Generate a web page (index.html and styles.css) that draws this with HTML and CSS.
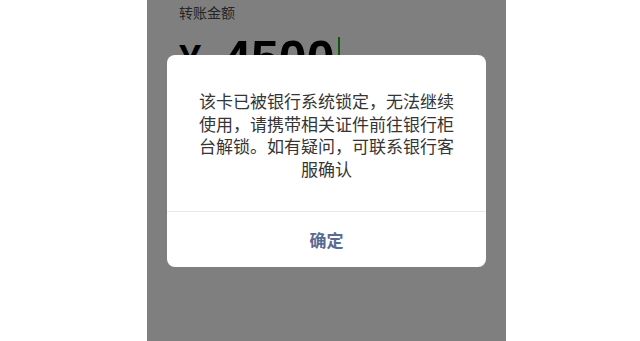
FILE: index.html
```html
<!DOCTYPE html>
<html lang="zh-CN">
<head>
  <meta charset="UTF-8">
  <meta name="viewport" content="width=device-width, initial-scale=1.0">
  <title>转账</title>
  <link rel="stylesheet" href="styles.css">
</head>
<body>
  <div class="phone">
    <!-- Transfer form behind the dialog -->
    <div class="transfer">
      <p class="label">转账金额</p>
      <div class="amount">
        <span class="currency">¥</span>
        <span class="value">4500</span>
        <span class="cursor"></span>
      </div>
    </div>

    <!-- Mask + alert -->
    <div class="mask"></div>
    <div class="dialog">
      <div class="dialog-body">
        该卡已被银行系统锁定，无法继续使用，请携带相关证件前往银行柜台解锁。如有疑问，可联系银行客服确认
      </div>
      <div class="dialog-footer">
        <button class="dialog-btn">确定</button>
      </div>
    </div>
  </div>
</body>
</html>
```

FILE: styles.css
```css
body {
  margin: 0;
  padding: 0;
  background: #fff;
  font-family: "Noto Sans CJK SC", "Liberation Sans", sans-serif;
}

.phone {
  position: relative;
  width: 359px;
  height: 341px;
  margin-left: 147px;
  background: #fff;
  overflow: hidden;
}

.transfer {
  padding: 0 32px;
}

.label {
  margin: 0;
  padding-top: 1px;
  font-size: 14px;
  line-height: 22px;
  color: #4a4a4a;
}

.amount {
  display: flex;
  align-items: center;
  margin-top: 6px;
  height: 60px;
  color: #000;
  font-family: "Liberation Sans", sans-serif;
  font-weight: bold;
}

.currency {
  font-size: 40px;
  margin-right: 22px;
}

.value {
  font-size: 50px;
}

.cursor {
  width: 2px;
  height: 44px;
  margin-left: 4px;
  background: #1aad19;
}

.mask {
  position: absolute;
  top: 0;
  left: 0;
  right: 0;
  bottom: 0;
  background: rgba(0, 0, 0, 0.5);
}

.dialog {
  position: absolute;
  top: 55px;
  left: 20px;
  right: 20px;
  background: #fff;
  border-radius: 8px;
  overflow: hidden;
}

.dialog-body {
  padding: 35px 29px 0;
  height: 121px;
  font-size: 17px;
  line-height: 22.5px;
  color: #353535;
  text-align: center;
}

.dialog-footer {
  border-top: 1px solid #e8e8e8;
}

.dialog-btn {
  display: block;
  width: 100%;
  height: 55px;
  border: none;
  background: none;
  font-family: inherit;
  font-size: 17px;
  font-weight: bold;
  color: #576b95;
  padding: 0;
}
```
